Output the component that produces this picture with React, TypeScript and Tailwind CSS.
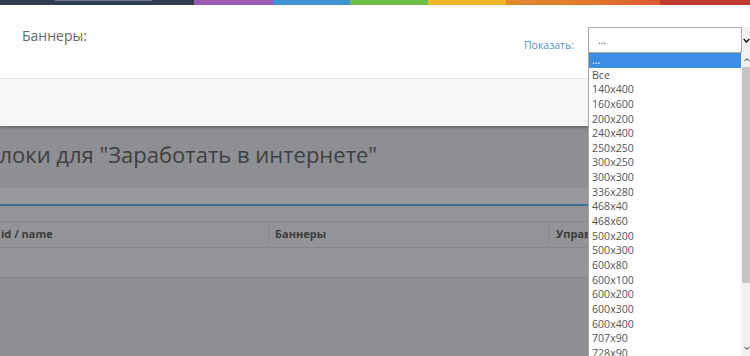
import React from "react";

const sizes = [
  "...",
  "Все",
  "140x400",
  "160x600",
  "200x200",
  "240x400",
  "250x250",
  "300x250",
  "300x300",
  "336x280",
  "468x40",
  "468x60",
  "500x200",
  "500x300",
  "600x80",
  "600x100",
  "600x200",
  "600x300",
  "600x400",
  "707x90",
  "728x90",
];

function Chevron({ className }: { className?: string }) {
  return (
    <svg viewBox="0 0 10 6" className={className} fill="none">
      <path d="M1 1l4 4 4-4" stroke="currentColor" strokeWidth="2" />
    </svg>
  );
}

export default function App() {
  return (
    <div className="relative h-[356px] w-[750px] overflow-hidden bg-[#8e8f93] font-['Open_Sans',sans-serif]">
      {/* colour stripe */}
      <div className="flex h-[5px]">
        <div className="relative w-[194px] bg-[#2c3e50]">
          <div className="absolute left-[55px] top-0 h-[1px] w-[97px] bg-[#6b7885]" />
        </div>
        <div className="w-[79px] bg-[#9b59b6]" />
        <div className="w-[77px] bg-[#3f94d4]" />
        <div className="w-[78px] bg-[#6cbe45]" />
        <div className="w-[78px] bg-[#f0b82a]" />
        <div className="w-[154px] bg-linear-to-r from-[#e08a2c] via-[#e37a2a] to-[#df5a32]" />
        <div className="flex-1 bg-[#c0392b]" />
      </div>

      {/* modal header */}
      <div className="flex h-[74px] border-b border-[#e2e2e2] bg-white">
        <div className="pl-[22px] pt-[21px] text-[14px] leading-[19px] text-[#666]">
          Баннеры:
        </div>
        <div className="ml-auto flex">
          <div className="pt-[33px] text-[10.5px] leading-[15px] text-[#5494cc]">
            Показать:
          </div>
          <div className="ml-[14px] mt-[22px] flex h-[26px] w-[162px]">
            <div className="flex w-[154px] items-center border border-[#aaa] pl-[9px] text-[10px] text-[#555]">
              ...
            </div>
            <div className="flex flex-1 items-center justify-center bg-[#f3f3f3]">
              <Chevron className="h-[5px] w-[7px] text-[#111]" />
            </div>
          </div>
        </div>
      </div>

      {/* modal footer band */}
      <div className="h-[47px] bg-[#f7f7f8] shadow-[0_2px_2px_rgba(0,0,0,0.25)]" />

      {/* page behind overlay */}
      <div className="pt-[13px]">
        <div className="-ml-[14px] whitespace-nowrap text-[22px] leading-[30px] text-[#3f3f41]">
          Блоки для "Заработать в интернете"
        </div>
      </div>
      <div className="mt-[18px] h-[19px] border-t border-[#8a8b8e] border-b-2 border-b-[#3d6e94] bg-[#98999c]" />
      <div className="bg-[#939497]">
        <div className="h-[15px]" />
        <div className="flex h-[27px] border-y border-[#86878a] text-[11px] font-bold text-[#3b3b3c]">
          <div className="flex w-[268px] items-center pl-[1px]">id / name</div>
          <div className="flex w-[280px] items-center border-l border-[#86878a] pl-[6px]">
            Баннеры
          </div>
          <div className="flex flex-1 items-center border-l border-[#86878a] pl-[7px]">
            Управление
          </div>
        </div>
        <div className="h-[30px] border-b border-[#86878a]" />
      </div>

      {/* open dropdown list */}
      <div className="absolute bottom-0 left-[588px] top-[53px] flex w-[170px] border-l border-[#a9a9a9] bg-white">
        <div className="w-[153px]">
          {sizes.map((s, i) => (
            <div
              key={s}
              className={`h-[14.65px] pl-[3px] text-[10.6px] leading-[14.65px] ${
                i === 0 ? "bg-[#3b8de6] text-white" : "text-[#555]"
              }`}
            >
              {s}
            </div>
          ))}
        </div>
        <div className="flex w-[17px] flex-col bg-[#f1f1f1]">
          <div className="flex h-[14px] items-center pl-[3px]">
            <Chevron className="h-[4px] w-[6px] rotate-180 text-[#777]" />
          </div>
          <div className="ml-[1px] h-[216px] w-[14px] bg-[#c6c6c6]" />
          <div className="flex-1" />
          <div className="flex h-[10px] items-start pl-[3px]">
            <Chevron className="h-[4px] w-[6px] text-[#777]" />
          </div>
        </div>
      </div>
    </div>
  );
}
